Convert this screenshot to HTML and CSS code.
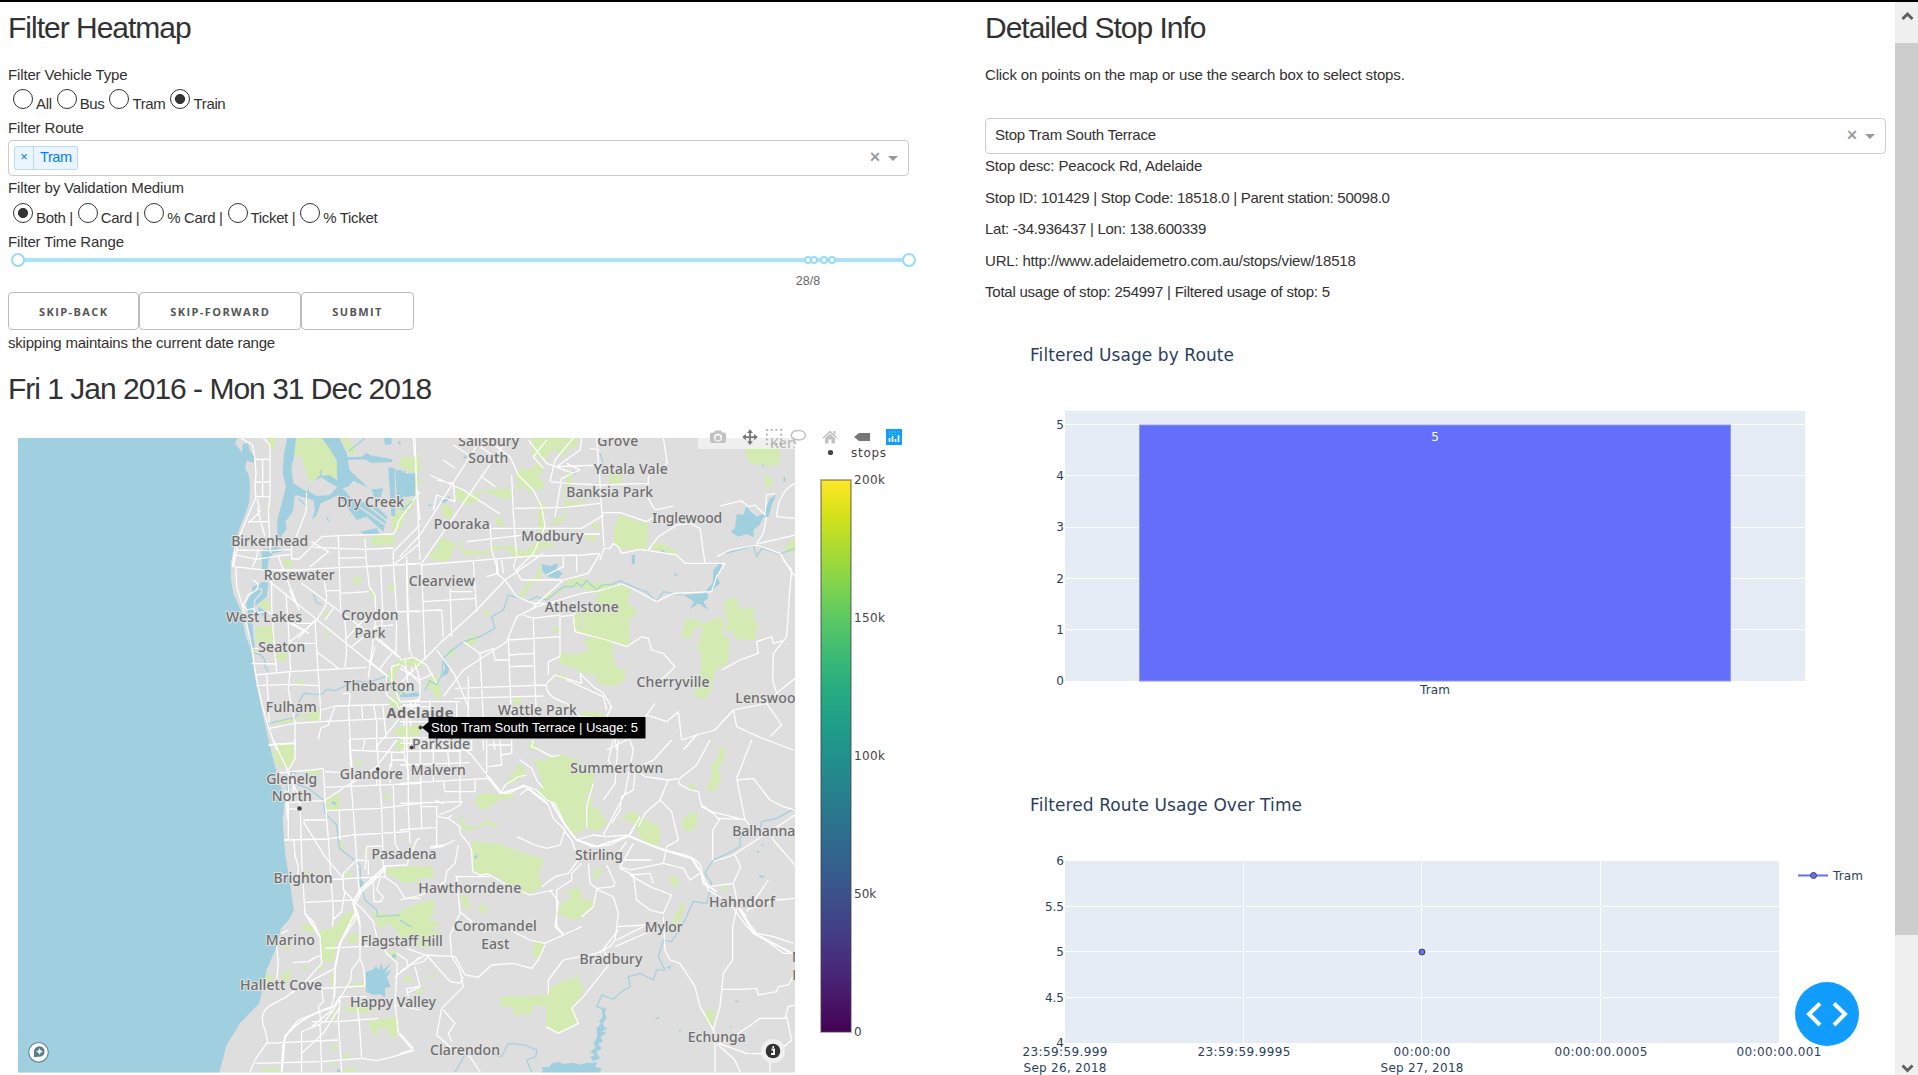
FILE: index.html
```html
<!DOCTYPE html>
<html lang="en">
<head>
<meta charset="utf-8">
<title>Adelaide Metro Heatmap</title>
<link rel="stylesheet" href="styles.css">
</head>
<body>
<div class="page">
<main class="columns">
<section class="column">
  <h3>Filter Heatmap</h3>
  <div class="line">Filter Vehicle Type</div>
  <div class="radios vehicle">
    <label><i class="radio"></i><span>All</span></label>
    <label><i class="radio"></i><span>Bus</span></label>
    <label><i class="radio"></i><span>Tram</span></label>
    <label><i class="radio checked"></i><span>Train</span></label>
  </div>
  <div class="line">Filter Route</div>
  <div class="select">
    <div class="tag"><span class="tag-x">×</span><span class="tag-name">Tram</span></div>
    <span class="clear">×</span><span class="arrow"></span>
  </div>
  <div class="line">Filter by Validation Medium</div>
  <div class="radios medium">
    <label><i class="radio checked"></i><span>Both |</span></label>
    <label><i class="radio"></i><span>Card |</span></label>
    <label><i class="radio"></i><span>% Card |</span></label>
    <label><i class="radio"></i><span>Ticket |</span></label>
    <label><i class="radio"></i><span>% Ticket</span></label>
  </div>
  <div class="line">Filter Time Range</div>
  <svg class="slider" viewBox="8 254 910 38" width="910" height="38">
    <rect x="18" y="258" width="891" height="4" fill="#abe2fb"/>
    <g fill="#fff" stroke="#96dbfa" stroke-width="2">
      <circle cx="808" cy="260" r="3"/><circle cx="814" cy="260" r="3"/><circle cx="824" cy="260" r="3"/><circle cx="832" cy="260" r="3"/>
      <circle cx="18" cy="260" r="6"/><circle cx="909" cy="260" r="6"/>
    </g>
    <text x="808" y="285" text-anchor="middle" class="mark">28/8</text>
  </svg>
  <div class="buttons"><button>Skip-back</button><button>Skip-forward</button><button>Submit</button></div>
  <div class="line hint">skipping maintains the current date range</div>
  <h3 class="date">Fri 1 Jan 2016 - Mon 31 Dec 2018</h3>

  <svg class="map" viewBox="8 408 910 667" width="910" height="667">
    <defs>
      <clipPath id="frame"><rect x="18" y="438" width="777" height="634.5"/></clipPath>
      <linearGradient id="viridis" x1="0" y1="1" x2="0" y2="0">
        <stop offset="0" stop-color="#440154"/><stop offset=".0627" stop-color="#48186a"/><stop offset=".1255" stop-color="#472d7b"/>
        <stop offset=".1882" stop-color="#424086"/><stop offset=".251" stop-color="#3b528b"/><stop offset=".3137" stop-color="#33638d"/>
        <stop offset=".3765" stop-color="#2c728e"/><stop offset=".4392" stop-color="#26828e"/><stop offset=".502" stop-color="#21918c"/>
        <stop offset=".5647" stop-color="#1fa088"/><stop offset=".6275" stop-color="#28ae80"/><stop offset=".6902" stop-color="#3fbc73"/>
        <stop offset=".7529" stop-color="#5ec962"/><stop offset=".8157" stop-color="#84d44b"/><stop offset=".8784" stop-color="#addc30"/>
        <stop offset=".9412" stop-color="#d8e219"/><stop offset="1" stop-color="#fde725"/>
      </linearGradient>
    </defs>
    <g clip-path="url(#frame)">
      <rect x="18" y="438" width="777" height="635" fill="#dedede"/>

      <!-- north west -->
      <g transform="translate(0 420) scale(.33333)">
        <g class="park">
          <path d="M885 54H970L1000 90 1014 140 1010 178 985 165 960 168 930 190 912 140 905 110 883 108ZM1020 54H1045L1072 100 1050 104ZM800 54H825V88H812ZM1225 112L1260 110V160L1245 155 1208 138ZM1175 290L1222 240 1260 230 1215 290 1205 325 1180 342ZM1115 347H1182V376H1115ZM845 422L878 418 875 440 862 445ZM1062 470H1083V493H1062ZM1165 497H1181V513H1165ZM780 543H817V569L780 566ZM768 620L820 618 822 672 770 666ZM830 700L866 692 862 712 848 726 832 720ZM972 580L986 570V584L972 588ZM975 630L984 635V658L978 655ZM1105 495L1125 520V545L1112 525ZM890 780L910 778V793L895 794ZM922 875L960 868V900L922 905ZM800 915L885 895 920 880 918 890 880 905 805 916ZM1160 765L1185 728 1215 715 1260 716V732L1215 730 1192 748 1182 770 1195 810 1225 822 1230 832 1195 828 1170 810ZM1168 825L1195 840 1205 850 1188 870 1168 850ZM1182 928L1260 912V950L1210 950 1182 946ZM1188 964H1210V988H1188ZM820 976L870 972V990H826ZM797 262L808 250V275ZM720 560L730 600 735 635 722 600ZM755 690H772V703H758Z"/>
        </g>
        <g class="water">
          <path d="M54 54H712L705 70 722 92 740 115 735 145 746 165 750 190 748 245 735 285 720 320 705 370 692 430 693 480 700 520 722 570 735 640 755 700 765 770 790 890 812 990H54Z"/>
          <path d="M862 54H888L882 110 874 145 880 190 920 215 935 190 958 168 990 165 1012 182 1010 120 985 80 965 54H1018L1040 100 1048 150 1105 203 1060 182 1045 200 1028 205 1058 240 1125 255 1162 290 1150 335 1100 290 1070 300 1015 225 985 240 962 250 950 285 935 300 945 270 940 240 885 225 878 275 856 305 860 328 842 350 845 370 832 360V300L845 250 858 200 848 160 852 100Z"/>
          <path d="M728 72L745 70 748 90 762 108V128L740 122 725 105ZM785 390L830 380 855 392 820 400 805 420 802 455 786 450ZM790 485L805 490 800 530 776 550 762 560 768 575 745 582 738 550 755 520 758 500ZM740 588L758 615 760 650 766 690 750 685ZM1040 112L1085 110 1100 98 1110 106 1178 118 1175 127 1112 128 1095 118 1040 120ZM1152 54H1175V72L1155 75ZM1165 142L1184 145 1186 288 1174 288ZM1186 150H1205L1212 225 1192 270ZM1210 155L1225 165 1230 230 1212 230ZM1227 162L1245 168V228H1232ZM1115 208L1150 205 1142 232H1122ZM1080 335L1130 325 1140 342 1090 342ZM1197 62L1203 66 1200 76 1195 70ZM1200 812L1225 825 1260 818V828L1218 832ZM775 560L805 580 795 595 775 575Z"/>
        </g>
        <path d="M935 185L965 172 990 190 1012 200 990 225 950 228 925 214Z" fill="#dedede"/>
        <path d="M1080 262L1160 318M1095 250L1165 306M764 510Q790 498 785 518L765 540Q760 560 766 572" class="gap"/>
        <path class="creek" d="M940 522L950 548 965 555M962 150V168M1045 95L1095 54M895 235L920 258M980 292L987 304M765 700Q800 705 795 740L805 755M800 912L885 892 905 870 897 845 912 820 965 825 980 808 1005 812 1030 800 1060 782 1105 788 1160 768 1170 800 1200 820M1230 250L1250 235"/>
        <g class="roads">
          <path d="M722 54L758 75 765 118 768 160 765 200 768 232 745 285 718 350 700 440M790 54L810 75V118 230L805 270 812 400M765 118H810M788 118V230M765 186H808M765 230H808M772 235L780 275 745 310M745 305H805M772 265L795 350M700 440L790 450 900 450 1015 443 1138 438 1260 430M708 405L770 418 820 410 875 403M705 375L698 440M775 388L768 418 756 442M710 390L812 392 875 388M920 218L918 275 875 385V417H898L935 380 965 350 1015 347 1180 342Q1195 320 1195 305L1260 215M935 365L985 395 930 440M940 382L1095 388 1180 384M1015 347L1018 445 1022 570M1015 415L1097 412M1260 315L1180 395V435L1190 575 1188 700M1180 435L1260 370M1095 355L1098 410 1108 500 1125 525 1128 590 1118 670 1105 775M1020 520L1105 515M978 512H1018M1142 440L1148 570 1145 620M1142 575H1260M708 445L710 500 728 560 742 620 755 680 768 770 785 850 805 920 830 990M760 480L775 492 770 510 745 525 730 555 740 570 760 565 768 578 800 575M810 485L1160 768M815 460V560L822 665 830 755M868 510L898 570M860 450V480M835 410L870 500 890 550M858 520L865 620 872 755M968 455L980 530 978 555 950 600 870 665M905 490L1095 630 1195 710M945 600L950 690 962 870 960 902M890 610H940M800 575L905 628M1000 565L975 600M1035 660L1100 590M760 685H775M755 730L828 732M765 765L870 755 1100 742M768 797L868 793 960 797M800 760L805 850 808 910M870 755L865 810 885 905V990M950 695L1015 745M1035 600L1040 690 1035 742M870 670H945M1130 650L1225 735M1175 700L1140 745M1105 720L1165 770M1125 680L1108 745M1055 680L1128 620 1180 615M810 925L880 910 965 905 1165 895M1005 858L985 915 962 925 955 958M965 870L1005 858 1168 853M1045 855L1052 990M1085 855L1088 900M1030 820H1050L1048 855M1120 850L1130 905V990M1148 855L1158 950M1205 730L1175 740V780L1200 845 1260 840M1160 765V825L1190 850 1212 900V990M1205 735L1260 790M1235 700V765M1208 855H1260M1208 870H1260M1208 888H1260M1210 905H1260M1232 845V990M1130 980L1210 880M1048 958L1260 950M805 975L885 970M1240 54L1250 200 1260 300M1220 410L1222 575 1230 700M860 600L928 640M895 655L945 600"/>
        </g>
      </g>

      <!-- north east -->
      <g transform="translate(400 420) scale(.33333)">
        <g class="park">
          <path d="M395 54H535L530 82 505 88 490 110 465 95 470 78 430 120 395 105ZM1035 84H1142L1138 132 1118 138 1052 132 1038 110ZM1095 165L1125 182 1105 205 1095 200ZM355 150L400 145 410 120 432 150 412 170 435 190 425 215 400 200 390 225 375 200 340 212 358 185 345 175ZM170 200L215 225 240 215 240 240 200 255 165 235ZM128 245L160 270 155 298 128 290ZM120 352L168 372 145 425 100 420 85 400 110 390ZM628 165H664V192H628ZM500 155L520 160 500 250 495 300 460 315 462 295 490 290ZM495 250L575 232 540 250 495 262ZM575 310L600 312 592 335 578 325ZM550 340L590 350 588 362 555 355ZM660 283L715 305 745 308 740 380 725 392 660 385 638 365 645 315ZM762 368L800 375 830 398 832 415 795 392 750 388ZM1150 395L1165 362 1185 355V398ZM180 352L195 390 260 395 280 375 340 380 375 395 410 365 465 370 458 382 420 385 410 405 340 410 320 385 285 388 275 400 200 408 180 390ZM420 432L425 470 385 505 370 535 355 532 380 490 405 475ZM510 475L555 475 580 488 610 485 645 492 690 500V530L680 548 715 575 688 600V640L690 672 665 675 635 660 600 665 575 648 545 640 550 605 540 585 575 560 600 525 540 500 500 505 440 538 425 535 490 500ZM522 580H540L545 640 525 635ZM458 575L475 568V585ZM460 622H478V635H462ZM255 572L270 575V585H252ZM975 540L1010 532 1018 570 1065 560 1058 592 1080 625 1068 630V662L1035 660 1005 655 1002 640 975 630 985 600 975 585ZM855 595L905 602 910 615 955 590 970 600 968 645 988 655 982 735 958 740 945 755 935 800 922 835 882 832 890 790 902 770 905 700 890 690 910 620 880 625 875 655 845 655ZM640 655L638 700 650 745 678 750 672 785 640 798 605 795 580 762 545 760 520 740 480 735V695L520 705 570 690 548 660 570 650 600 660ZM470 762L500 765 500 782 480 775ZM340 832H362V855H340ZM545 875L600 880 625 895H545ZM0 715L35 715 72 725 60 745 0 732ZM70 795L100 765 115 770 125 830 110 838 100 815ZM0 920L60 915V950H0ZM385 965L410 975 408 990H390ZM960 980L975 985V990H958ZM0 110L45 112V160L0 140ZM45 160L65 182 45 225ZM235 210L330 205 335 235 310 238 270 220ZM285 290L310 300V318L290 312ZM415 240L435 250 430 345 415 340ZM190 665L225 640 235 660 205 685ZM145 690L160 685 165 702 145 715Z"/>
        </g>
        <g class="water">
          <path d="M1128 225L1115 255 1105 292 1090 290 1078 315 1060 330 1062 352 1040 342 1015 350 992 335 1005 325 1010 282 1030 285 1040 258 1052 275 1070 290 1092 280 1110 235ZM425 432L450 438 475 430 470 448 488 460 475 475 445 470 428 455ZM695 405H705V432H695ZM820 458L835 465 825 468ZM965 440L952 470 960 490 940 508 920 515 925 535 910 545 925 570 895 550 870 568 882 545 852 525 910 520 938 490 940 450 962 425ZM0 165L15 150 20 225 0 230ZM22 160H45V228H24ZM122 242L150 228 148 240 128 250ZM85 250L98 258 88 260ZM0 268L45 240 12 270ZM518 152L528 158 522 168ZM1085 130L1092 140 1088 142ZM1150 172H1156V185H1150ZM192 104L202 112 190 118ZM780 385L800 398 790 400ZM0 825L55 815 35 830 0 832ZM130 715L148 740 145 760 125 770 135 745Z"/>
        </g>
        <path class="creek" d="M75 812L88 782 110 795 125 765 130 715 150 695 190 665 240 650 285 625 275 590 310 570 325 525 360 535 385 542 410 530 440 540 490 500 520 500 530 488 545 500 560 482 590 510 605 495 640 492 660 482 710 505 740 515 768 545 790 515 850 525M975 400L1060 378 1070 410 1085 385 1140 402 1185 385M600 100L610 130"/>
        <g class="roads">
          <path d="M45 54L50 200 60 420M245 54L60 345 0 410M325 54L65 430M200 54L300 120M255 54L330 110M90 165L190 210 300 282M130 120L165 145M160 75L215 110M240 165L285 200M335 165L340 280 350 410M330 110L355 165 400 210 425 260 435 320 400 400 350 450M385 60L440 130 520 160M520 54L465 120 450 185 500 190 605 195M545 54L540 90 470 140 600 135M440 60L400 110 430 145M570 85L600 90M590 54L600 190 612 380M500 130L540 150 485 175 465 290M345 265L495 262 600 250M605 195L745 190 745 170 802 130 795 85 790 54M745 190L742 230 765 270 820 258M605 278L660 278 740 305 765 290M960 258L1025 242 1045 260 1065 255 1095 285 1100 225 1125 220M1185 190Q1135 215 1130 290L1185 295M1100 290L1090 340 1070 370M1185 345L1070 372M745 390L775 350 830 315 870 310M870 310L900 325 915 430M60 435L400 408 550 405 600 400M270 312L275 390 290 440 290 460 315 480 350 530 400 550 490 550M270 325L545 325 612 285M200 365L370 345 600 342M612 385L630 385 640 370 655 380 665 400 720 388 830 405 855 430 915 430 975 430 950 470 935 515 820 520 770 545 705 510 665 492 600 512 545 520 410 560 350 590 320 665 190 750M600 400L565 460 490 480 400 560M612 385L600 420M290 420L295 460 260 470M315 480L230 570 120 670 70 720 0 790M220 425L230 575M0 435L60 430M20 420L28 690M65 435L75 720M0 575L125 570M70 545L230 535M150 505L155 650M150 515H215M125 570L130 650M305 420L310 460M350 410L340 440 365 480 485 480M315 480L430 400M440 465L490 440 490 405M530 405V455M325 660L330 790 335 900M325 660L480 650V710L445 725V765M400 590L405 800 410 890M370 585L400 595 480 585V650M480 590L520 585 525 635 620 660 680 680 725 650 745 655 755 690 790 700 825 740 800 765 765 790M520 545L525 585M190 665L240 700 250 900M240 700L280 685 285 720H325M325 705L400 700M325 740L400 738M110 690L165 765 205 860M190 750L130 830M165 805L440 795M165 835L430 828M205 770V900M440 795Q435 830 500 850L540 890 625 895M440 790L465 765 545 790 540 760 580 800 610 820 635 860 620 890 640 930M500 780L610 830 620 870M740 885L765 850M740 885L720 910 730 960M740 885L800 905 835 875 845 960M845 960L890 945 945 930 1000 870M965 750L1020 720 1075 700 1070 665 1115 650 1120 670 1155 660M1185 470L1150 420 1175 450 1168 530 1160 650 1120 700 1118 780 1130 820M1130 820L1185 775M1130 820L1100 850 1000 870 1010 920 1075 950 1180 990M1100 850L1145 915 1110 950M950 410L990 390 1070 375 1140 400 1165 440M850 990L890 945M700 950L620 990M640 930L650 990M110 180L160 190 165 245 110 225 100 270M0 720L40 712 80 735 110 790M0 745L60 780 100 760M15 720L25 800M45 730L60 780M0 845H180M0 860H90M0 885H90M0 905H90M60 780V830L20 890V990M90 840L85 960 95 990M0 955L250 950M130 870V990M250 960V990M280 960L285 990M170 850V900"/>
        </g>
      </g>

      <!-- south west -->
      <g transform="translate(0 740) scale(.33333)">
        <g class="park">
          <path d="M835 15H885V60L865 90 845 75 830 40ZM815 30L830 40 845 85 830 75ZM1068 65L1083 62V75L1065 78ZM1152 162H1168V178H1152ZM980 175L1018 160V210H980ZM925 90L965 85 955 105 925 110ZM1188 5H1210V30H1188ZM1018 295L1040 345 1018 325ZM1095 318H1105V338H1095ZM1038 395H1055V410H1038ZM1160 385L1260 378V425L1215 430 1158 400ZM912 395H935V402H912ZM905 552L940 555 945 580 925 575 905 568ZM1060 510L1068 525 1035 580 1010 610 1000 665H968L965 625 960 580 950 572 1000 565 1030 525ZM1045 585L1078 580 1070 610H1045ZM1115 515L1180 525 1260 490V590L1200 585 1165 545 1140 570ZM835 615L880 618 860 628ZM905 695L925 665 918 690ZM860 695L875 690 865 725 845 735 840 710ZM795 700L820 710 790 755 785 740ZM950 690L968 665V690ZM1000 685L990 720 1000 740 1008 700ZM1040 735L1092 725V745ZM1165 635L1190 630 1190 665 1165 650ZM1215 710H1232V726H1215ZM1103 845L1192 828V892L1170 888 1160 862 1130 868 1140 890 1118 880ZM1030 800L1100 800 1130 815 1085 820 1040 812ZM1010 805V835L992 840ZM990 920L1012 912V925L998 928ZM1030 940L1052 945V955H1030ZM985 965L1010 968 1000 978ZM785 988L830 982 850 996H785ZM1030 985H1075L1060 996H1030ZM1240 310H1248V325H1240ZM1155 330H1170V350Z"/>
        </g>
        <g class="water">
          <path d="M54 0H805L828 90 830 110 855 170 848 240 855 340 872 440 881 510 870 535 843 565 830 620 800 690 785 760 778 790 720 850 680 915 668 960 657 1000H54ZM865 90L875 100 868 150 858 155ZM992 190L1002 182 1012 196ZM1078 415L1090 425V445L1080 440ZM1098 695L1118 690 1128 678 1138 690 1142 668 1150 690 1172 668 1155 700 1175 688 1160 712 1172 740 1155 745V772L1140 762 1120 765 1098 755Z"/><circle cx="1182" cy="648" r="6"/><circle cx="1016" cy="992" r="5"/>
        </g>
        <path class="creek" d="M865 95L890 100M885 130L925 145 970 180 975 220 1010 255 1018 325 1060 358 1080 375 1082 430 1095 480 1130 510 1132 530 1200 525 1235 562"/>
        <g class="roads">
          <path d="M805 15L885 8M820 0L865 95 900 180 905 360 915 520 940 545 960 590 965 670 920 720 860 770 805 800Q775 825 795 870L803 905 765 960 750 996M885 0V55L865 90M830 100L870 95 935 90 970 85 975 180 985 295 990 375 1000 510 998 560M865 95V160L865 300M880 100V180M858 150L862 240M860 188L975 182M860 206L900 208M852 300L985 297 1060 285 1225 275M975 95L1020 98M975 142L1260 130M975 180L1130 80 1190 0M978 212L1140 205 1260 190M1048 0L1055 150 1065 280 1070 360 1078 460M1048 30L1210 38M1095 0L1088 30M1130 0L1145 200 1150 380M1130 80V135M1170 70V130M1175 35V80M1212 0V38L1225 100V210L1230 310M1180 135L1185 310 1200 340 1220 350M1052 35L1060 130M1175 60H1215M910 240L980 240M910 245L975 350 1030 415M882 300L885 345 895 380 893 440M1018 210L1020 300M1100 320L1145 318M1100 320L1095 390M1065 360L1105 362 1105 405M1070 360L1030 400V450L1060 480M960 420L1155 410 1155 375M1155 412L1190 435 1215 475H1260M1155 378L1220 375 1250 300 1260 295M1150 350L1130 330M1155 390L1110 430Q1065 470 1058 490Q1078 530 1055 555L1020 610 1005 680 1003 770 990 815M1158 384L1115 430Q1082 450 1068 490L1090 510 1120 545 1130 590 1160 640 1192 670 1185 790M1060 490Q1080 520 1080 560V655L1055 690 1052 720 1000 810 970 850M915 487L1060 480M1035 450L1025 515 998 540M1120 430L1122 485H1142L1150 470 1130 450 1140 415M975 625L1165 615M845 580L865 570M830 620L835 670 830 720M878 668L925 665 950 650 965 648M1005 685L900 740 875 760M1080 655L1090 680 1095 735M960 745L1095 738M965 745L970 785 955 800 965 850 905 875V996M1190 640L1220 660 1225 680 1185 710M1225 680L1260 650M1225 770L1220 745 1260 740M1020 780L1015 840 1025 996M1020 800L970 880 905 940M1100 770H1020L1000 800 895 840Q850 890 848 920L845 996M990 815L935 860M1010 845L1135 835M935 845H1010M1070 780L1078 850 1085 955M800 910L1015 900M765 970L960 965 1085 955 1130 962 1180 950 1240 932 1195 880 1185 790M960 850L965 996M1185 795L1260 810"/>
          <path class="thick" d="M1155 380L1085 445Q1055 480 1065 510L1080 555M1065 520L1020 610 1005 685 1003 770M1000 800Q900 830 855 890L845 996M915 520L960 590"/>
        </g>
      </g>

      <!-- south east -->
      <g transform="translate(400 740) scale(.33333)">
        <g class="park">
          <path d="M395 0H405L410 22 398 30ZM400 55L435 65 440 50 490 42 530 60 585 95 580 130 582 150 555 165 560 260 530 285 512 280 495 245 465 190 430 180 415 150 428 130ZM560 165L580 175 575 200 600 210 605 230 625 245 595 275 562 265ZM230 170L255 158 290 162 340 160 345 170 290 185 250 210 225 195ZM172 222L185 230 200 262 240 255 262 238 295 258 292 265 260 252 210 272 190 270ZM365 75L380 100 370 110 345 125 310 140 325 115 345 100 328 98 352 92 345 82ZM215 302L300 312 360 335 435 358 415 400 425 440 395 460 370 460 320 430 285 405 240 402 215 395ZM665 235L695 210 720 230 760 250 780 262V310L755 320 725 300 700 248ZM845 240L875 215 895 225 890 255 865 278 848 265ZM960 22L978 25 970 60 955 90 965 115 942 155 918 150 938 100 930 80 950 60ZM860 140L880 128 885 150 865 150ZM580 395L610 378 600 405 580 425ZM500 455L530 442 548 458 540 475 580 482 578 505 550 520 545 538 515 540 472 520 480 495 512 475ZM805 415L830 408 838 430 820 443ZM845 490L855 495 840 545 815 550 825 525ZM962 435L990 442 970 455ZM0 385L95 378 102 415 40 412 0 425ZM0 515L50 492 105 480 100 520 85 540 122 550 95 570 125 580 100 620 70 625 0 590ZM180 465L205 470 210 508 190 505ZM235 498L250 492 262 508 255 525 238 515ZM400 620L412 598 432 610 425 640 412 655 395 645ZM450 740L480 730 490 720 525 715 530 695 542 735 555 742 540 775 518 800 535 840 530 855 475 880 438 858V800L398 795 395 825H345L335 798 302 802V770L440 765ZM70 708L108 705 108 712 75 712ZM15 710H35V725H15ZM45 745L75 755 55 765ZM918 810L945 812 938 862 912 840ZM0 5H12V25H0ZM485 115L505 120V138L485 135Z"/>
        </g>
        <g class="water">
          <path d="M222 350L232 343V353L224 356ZM1080 315L1090 312 1092 317ZM1068 333H1078V337H1070ZM1075 405L1095 408 1085 415ZM1005 780L1015 783 1008 788ZM762 840L778 828 775 836ZM835 868L845 873 838 876ZM988 858L998 861 992 864ZM605 800L612 808 620 800 614 820 620 835 608 848 612 860 622 865 606 875 620 878 602 890 608 905 594 912 606 925 588 935 600 955 575 965 592 968 585 980 605 985 600 998H422L430 992 424 982 450 980 455 970 475 965 490 972 520 968 540 974 560 968 582 970 572 950 585 945 570 935 586 925 582 908 592 890 590 865 604 850 596 845 608 830Z"/><path d="M800 682L815 675 808 688Z"/>
        </g>
        <path class="creek" d="M605 805L590 800 605 765 640 778 665 755 690 740 685 710 720 700 760 720 770 690 795 690 775 650 790 600 815 605 850 550 880 485 920 490 935 430 915 400 940 360 985 340 1020 320 1020 290 1080 270 1085 245 1130 235 1185 205M0 540L35 562M165 996L195 945 250 935 305 950 325 910 375 915 410 930 408 950 380 960 395 996"/>
        <g class="roads">
          <path d="M0 10H200M0 35L215 30M0 75L210 68M0 130L265 115 300 160 330 160 370 135 410 150 440 180 465 190 495 255 530 300M185 20L215 45 265 110M20 0L25 130M60 0L65 270M100 0V130M140 0L150 110M180 30V185M215 0V30M260 0V110M265 15H335M300 0L305 75 265 80M335 0V40L300 45M130 125L135 155H225V118M0 190L185 185 180 195 155 210 115 225M60 200H110V230L145 235M0 270L60 265 110 262M105 180L130 192M90 325L125 320 165 300M155 225L145 235 180 260 180 280 205 310 215 330 218 395 240 405 265 402 320 435 390 465 460 450M110 235V315M90 320L135 315M0 480L65 465 135 425 140 395 165 370 175 315M165 410H270M170 410L180 520 150 585 155 650 180 690 190 740 125 805 110 885 150 920 210 950 240 996M180 515L250 575 330 570 390 600 435 610 490 585 545 560M400 0L395 20 415 28 455 50 480 45M360 60L395 85 410 120 430 145M305 155L315 135 355 110 380 105M360 165L385 145 420 170 445 195 460 235 495 270 480 315 440 325 405 315 350 290M530 300L575 320 630 315 685 288 760 320 870 350Q910 370 905 400L925 440 1000 430M495 275L515 300 535 360 505 400 465 410 425 440M530 300L580 285 620 290 690 285 720 230M560 260V200L580 130M640 0L625 60 640 90M655 0L645 130 610 180M690 0L700 30 675 160 610 285M705 100L700 150 665 170 660 210 635 250M815 0L760 60 705 85 735 110 805 120 840 115 890 75 930 0M805 120L780 180 735 220 715 260M780 180L815 215 835 300 800 320 790 370M840 115L835 130 870 150 895 155 905 200 940 220 958 240 938 270V360M905 195L935 215 1035 240 1010 115 1055 0M1010 120L1060 115 1110 180 1150 200 1185 210M955 235L1035 238 1060 270M1185 375L1120 300 1110 280M1185 225L1000 345 940 365M1005 345L1022 380 1000 430 1015 500 1040 530M1040 515L1105 420M1040 510L1130 480 1185 475M900 400L870 420 850 385 790 370 690 390 660 380 700 310M565 370L570 430 595 450 640 470 655 520 645 600 630 620 590 640 490 660 445 720V765M545 370L515 400V420L470 450 470 560 490 580M590 450L580 500 545 530M620 375L645 430 640 440 590 445M450 450L475 485 465 560 490 585M660 385L700 405 710 480 750 510 790 520 815 465 750 440 690 405 750 400 760 430M650 560L740 555M650 600L730 560M645 620L760 570 790 560M790 530L795 630 810 660 840 670 885 740 900 800 940 870 948 910M905 400L925 450 990 490 1040 560 1110 610 1150 640 1185 640M1015 505L1070 580 1120 590 1180 610M1010 505L998 560V660L970 700 965 750M965 748H1025L1070 745 1075 765 1130 755 1135 740 1165 735 1185 700M965 750L960 800 940 870M945 910V996M950 915L985 900 1060 850 1080 835 1155 835 1165 800 1185 795M955 910L1040 940 1110 942M955 915L1005 960 1020 996M1110 955V996M1160 830L1175 900 1140 930M435 615L415 660 395 685 340 670 275 675 235 712 195 705 165 650 75 645 20 680M190 710L180 730 150 725 80 645M20 625L75 645M45 680L60 740 20 760M630 670L550 770 515 805 535 850 475 880 438 860M0 880L40 925M0 940L35 930M130 810L165 850 145 880 155 905M635 670L610 630M685 290L720 230M600 640L655 570M680 305L640 360 755 360M0 695L30 675 70 665 90 645"/>
          <path class="thick" d="M265 110L305 160 375 138 440 190M455 190L495 255 530 300 590 320 685 288 790 330 875 355 905 400 910 430 950 455M1015 500L1060 580 1120 610 1185 645"/>
        </g>
      </g>

      <g class="places">
        <text x="488.7" y="446" textLength="61">Salisbury</text><text x="488.3" y="463" textLength="40">South</text>
        <text x="370.7" y="507" textLength="67">Dry Creek</text><text x="269.7" y="546" textLength="77">Birkenhead</text>
        <text x="299.3" y="580" textLength="71">Rosewater</text><text x="264" y="622" textLength="76">West Lakes</text>
        <text x="370" y="620" textLength="57">Croydon</text><text x="370" y="638" textLength="31">Park</text>
        <text x="281.7" y="652" textLength="47">Seaton</text><text x="379" y="691" textLength="71">Thebarton</text>
        <text x="291.3" y="712" textLength="51">Fulham</text><text x="420" y="718" textLength="67" class="city">Adelaide</text>
        <text x="617.7" y="446" textLength="41">Grove</text><text x="630.7" y="474" textLength="74">Yatala Vale</text>
        <text x="609.7" y="497" textLength="87">Banksia Park</text><text x="461.7" y="529" textLength="56">Pooraka</text>
        <text x="552.3" y="541" textLength="62">Modbury</text><text x="687.3" y="523" textLength="70">Inglewood</text>
        <text x="441.7" y="586" textLength="66">Clearview</text><text x="581.7" y="612" textLength="74">Athelstone</text>
        <text x="673" y="687" textLength="73">Cherryville</text><text x="769.8" y="703" textLength="69">Lenswood</text>
        <text x="537.3" y="715" textLength="79">Wattle Park</text><text x="441" y="749" textLength="58">Parkside</text>
        <text x="438.3" y="775" textLength="55">Malvern</text><text x="291.7" y="784" textLength="51">Glenelg</text>
        <text x="291.7" y="801" textLength="40">North</text><text x="371.3" y="779" textLength="63">Glandore</text>
        <text x="616.7" y="773" textLength="93">Summertown</text><text x="404" y="859" textLength="65">Pasadena</text>
        <text x="303" y="883" textLength="59">Brighton</text><text x="599" y="860" textLength="48">Stirling</text>
        <text x="763.7" y="836" textLength="63">Balhanna</text><text x="469.7" y="893" textLength="103">Hawthorndene</text>
        <text x="742" y="907" textLength="66">Hahndorf</text><text x="495.3" y="931" textLength="83">Coromandel</text>
        <text x="495.3" y="949" textLength="28">East</text><text x="663.7" y="932" textLength="38">Mylor</text>
        <text x="290.3" y="945" textLength="49">Marino</text><text x="401.7" y="946" textLength="82">Flagstaff Hill</text>
        <text x="611" y="964" textLength="63">Bradbury</text><text x="281" y="990" textLength="82">Hallett Cove</text>
        <text x="393" y="1007" textLength="86">Happy Valley</text><text x="465" y="1055" textLength="70">Clarendon</text>
        <text x="716.7" y="1042" textLength="58">Echunga</text><text x="797.5" y="962">N</text><text x="797.5" y="980">H</text>
        <text x="770" y="448" class="cut">Kers</text>
      </g>
      <g fill="#444"><circle cx="420.5" cy="727.5" r="2"/><circle cx="411.5" cy="747.5" r="2"/><circle cx="299.5" cy="808.5" r="2.3"/><circle cx="377.7" cy="769" r="1.7"/></g>
      <g>
        <circle cx="38.5" cy="1052.3" r="9.8" fill="#fff" stroke="#5f8796" stroke-width="1.2"/>
        <path d="M34 1057V1051.500A5.300 5.300 0 1 1 39 1056.800Z" fill="#567d8c"/><path d="M39.500 1048.500L40.500 1050.600 42.500 1051.500 40.500 1052.400 39.500 1054.500 38.500 1052.400 36.500 1051.500 38.500 1050.600Z" fill="#fff" stroke="#fff" stroke-width=".4"/>
        <circle cx="773" cy="1051" r="12" fill="#f0f0f0"/><circle cx="773" cy="1051" r="7.300" fill="#333"/>
        <path d="M771.500 1049.500H774V1054H775M771 1054H775M772.500 1047H774" stroke="#fff" stroke-width="1.800" fill="none"/>
      </g>
    </g>

    <!-- chart toolbar -->
    <rect x="698" y="427" width="206" height="22" fill="#fff" opacity=".5"/>
    <g fill="#c2c2c2">
      <path fill-rule="evenodd" d="M712 432.500H714L715 430.500H721L722 432.500H724Q726 432.500 726 434.500V441Q726 443 724 443H712Q710 443 710 441V434.500Q710 432.500 712 432.500ZM718 433.800A4 4 0 1 0 718 441.800A4 4 0 1 0 718 433.800ZM718 435.300A2.500 2.500 0 1 1 718 440.300A2.500 2.500 0 1 1 718 435.300Z"/>
      <path d="M830 430.500L837.500 437.500 836.500 438.500 830 432.700 823.500 438.500 822.500 437.500ZM830 433.800L835 438.300V443.500H831.500V439.500H828.500V443.500H825V438.300ZM833.500 431H835.500V435L833.500 433.200Z"/>
    </g>
    <path d="M766.900 429V445M781.100 429V445M766 429.900H782M766 444.100H782" stroke="#aaa" stroke-width="1.800" stroke-dasharray="1.800 2.950" fill="none"/>
    <path d="M796 440C788 437 791 430.500 799 430.500C807 430.500 808 440 799 440C797 440 794 438 793.500 440C793 442 796 441 795.500 444" stroke="#c2c2c2" stroke-width="1.500" fill="none"/>
    <g fill="#777"><path d="M750 429.300L753 433H750.900V436.200H754.100V434L757.800 437.100 754.100 440.200V438H750.900V441.200H753L750 445 747 441.200H749.100V438H745.900V440.200L742.200 437.100 745.900 434V436.200H749.100V433H747Z"/><path d="M854 437L859 433H870V441H859Z"/></g>
    <rect x="886" y="429" width="16" height="16" fill="#119dff"/>
    <path d="M889.500 438V442M892.500 436V442M895.500 439V442M898.500 435V442" stroke="#fff" stroke-width="1.700"/><path d="M889 434.500H890.500M889 432H899M892 434.500H893M895 434.500H896" stroke="#6ce0ff" stroke-width="1.200" stroke-dasharray="1.300 1.600"/>

    <circle cx="830.500" cy="452.500" r="2.600" fill="#444"/>
    <rect x="821" y="480" width="30" height="552" fill="url(#viridis)" stroke="#444" stroke-opacity=".55" stroke-width="1.500"/>
    <g class="ticks dark"><text x="851" y="457" textLength="35">stops</text><text x="854" y="484" textLength="31">200k</text><text x="854" y="622" textLength="31">150k</text><text x="854" y="760" textLength="31">100k</text><text x="854" y="898">50k</text><text x="854" y="1036">0</text></g>
    <path d="M422 727.500L428.500 722V717H645.500V738.500H428.500V733Z" fill="#000"/>
    <text x="431" y="732" class="tip" textLength="207">Stop Tram South Terrace | Usage: 5</text>
  </svg>
</section>

<section class="column">
  <h3>Detailed Stop Info</h3>
  <div class="line intro">Click on points on the map or use the search box to select stops.</div>
  <div class="select"><span class="value">Stop Tram South Terrace</span><span class="clear">×</span><span class="arrow"></span></div>
  <div class="details">
    <p>Stop desc: Peacock Rd, Adelaide</p>
    <p class="numeric">Stop ID: 101429 | Stop Code: 18518.0 | Parent station: 50098.0</p>
    <p class="numeric">Lat: -34.936437 | Lon: 138.600339</p>
    <p class="url">URL: http://www.adelaidemetro.com.au/stops/view/18518</p>
    <p class="totals">Total usage of stop: 254997 | Filtered usage of stop: 5</p>
  </div>
  <svg class="chart" viewBox="985 304 901 450" width="901" height="450">
    <text x="1030" y="361" class="title" textLength="204">Filtered Usage by Route</text>
    <rect x="1065" y="411" width="740" height="270" fill="#e5ecf6"/>
    <path d="M1065 424.500H1805M1065 475.500H1805M1065 527.500H1805M1065 578.500H1805M1065 629.500H1805" class="grid"/>
    <rect x="1139.500" y="425" width="591" height="256" fill="#636efa" stroke="#8f99fb"/>
    <text x="1435" y="441" class="ticks white" text-anchor="middle">5</text>
    <g class="ticks" text-anchor="end"><text x="1064" y="429">5</text><text x="1064" y="480">4</text><text x="1064" y="531">3</text><text x="1064" y="583">2</text><text x="1064" y="634">1</text><text x="1064" y="685">0</text></g>
    <text x="1435" y="694" class="ticks" text-anchor="middle" textLength="30">Tram</text>
  </svg>
  <svg class="chart" viewBox="985 754 901 321" width="901" height="321">
    <text x="1030" y="811" class="title" textLength="272">Filtered Route Usage Over Time</text>
    <rect x="1065" y="861" width="714" height="182" fill="#e5ecf6"/>
    <path d="M1065 906.500H1779M1065 951.500H1779M1065 997.500H1779M1243.500 861V1043M1421.500 861V1043M1600.500 861V1043" class="grid"/>
    <circle cx="1422" cy="952" r="3" fill="#636efa" stroke="#444"/>
    <g class="ticks" text-anchor="end"><text x="1064" y="865">6</text><text x="1064" y="911">5.5</text><text x="1064" y="956">5</text><text x="1064" y="1002">4.5</text><text x="1064" y="1047">4</text></g>
    <g class="ticks" text-anchor="middle"><text x="1065" y="1056" textLength="85">23:59:59.999</text><text x="1065" y="1072" textLength="83">Sep 26, 2018</text><text x="1244" y="1056" textLength="93">23:59:59.9995</text><text x="1422" y="1056" textLength="57">00:00:00</text><text x="1422" y="1072" textLength="83">Sep 27, 2018</text><text x="1601" y="1056" textLength="93">00:00:00.0005</text><text x="1779" y="1056" textLength="85">00:00:00.001</text></g>
    <path d="M1798 875.500H1828" stroke="#636efa" stroke-width="2"/><circle cx="1813.500" cy="875.500" r="3" fill="#636efa" stroke="#444"/>
    <text x="1833" y="880" class="ticks" textLength="30">Tram</text>
  </svg>
</section>
</main>
<aside class="scrollbar">
  <svg viewBox="0 0 23 41" width="23" height="41"><path d="M7.500 17L12.500 12 17.500 17" class="chevron"/></svg>
  <div class="thumb"></div>
  <svg class="down" viewBox="0 0 23 23" width="23" height="23"><path d="M7.500 13.500L12.500 18.500 17.500 13.500" class="chevron"/></svg>
</aside>
</div>
<svg class="debug" viewBox="0 0 64 64" width="64" height="64"><circle cx="32" cy="32" r="32" fill="#119dff"/><path d="M25 21.500L14 32 25 43M39 21.500L50 32 39 43" fill="none" stroke="#fff" stroke-width="4"/></svg>
</body>
</html>
```
FILE: styles.css
```css
* { box-sizing: border-box; }
body {
  margin: 0;
  height: 1075px;
  overflow: hidden;
  background: #fff;
  color: #323232;
  font: 15px/24px "Liberation Sans", Arial, sans-serif;
  letter-spacing: -.15px;
}
svg { letter-spacing: 0; }
.page { display: flex; height: 1075px; border-top: 2px solid #000; overflow: hidden; }
.columns { flex: 1; display: grid; grid-template-columns: 977px 901px; padding: 6px 0 0 8px; }
.column { display: flex; flex-direction: column; min-width: 0; }
.column > * { flex-shrink: 0; }
h3 { margin: 0 0 16px; font-size: 30px; line-height: 39px; letter-spacing: -1px; font-weight: 400; }
.line { height: 24px; }
.radios { display: flex; gap: 5px; padding-left: 5px; letter-spacing: -.35px; }
.vehicle { height: 29px; padding-top: 2px; }
.medium { height: 30px; padding-top: 3px; }
.radios label { display: flex; gap: 3px; }
.radios span { padding-top: 3px; white-space: nowrap; }
.radio { width: 20px; height: 20px; border: 1px solid #333; border-radius: 50%; background: #fff; }
.radio.checked { background: radial-gradient(circle, #333 0 4.700px, #fff 5.300px); }
.select {
  display: flex;
  align-items: center;
  width: 901px;
  height: 36px;
  border: 1px solid #ccc;
  border-radius: 4px;
  padding: 0 10px 0 5px;
}
.tag {
  display: flex;
  height: 24px;
  margin-bottom: 1px;
  border: 1px solid #b8dafd;
  border-radius: 2px;
  background: #ebf5ff;
  color: #007eff;
  line-height: 21px;
}
.tag-x { width: 19px; border-right: 1px solid #b8dafd; text-align: center; font-size: 13px; line-height: 19px; }
.tag-name { padding: 0 5px 0 6px; font-size: 14.500px; letter-spacing: -.4px; }
.value { padding-left: 4px; margin-bottom: 2px; letter-spacing: -.25px; }
.clear { margin-left: auto; margin-bottom: 3px; color: #999; font-size: 18px; line-height: 20px; -webkit-text-stroke: .5px #999; }
.arrow { margin-left: 8px; border: 5px solid transparent; border-top-color: #999; border-bottom: 0; }
.slider { display: block; overflow: visible; }
.mark { font-size: 12.500px; fill: #666; }
.buttons { display: flex; height: 38px; }
button {
  height: 38px;
  padding: 1px 30px 0;
  border: 1px solid #bbb;
  border-radius: 4px;
  background: #fff;
  color: #555;
  font: 700 11px/36px "Open Sans", sans-serif;
  letter-spacing: 1.400px;
  text-transform: uppercase;
  white-space: nowrap;
}
.hint { margin: 1px 0 14px; letter-spacing: -.2px; }
.date { margin: 0; }
.intro { margin-bottom: 31px; }
.details { height: 150px; }
.details p { margin: 0 0 7.500px; }
.details .numeric { letter-spacing: -.27px; }
.details .url { letter-spacing: -.18px; }
.details .totals { letter-spacing: -.23px; }
.chart, .map { display: block; }
.park { fill: #d3eab3; }
.water { fill: #a0cfdf; }
.gap { fill: none; stroke: #dedede; stroke-width: 5; }
.creek { fill: none; stroke: #a0cfdf; stroke-width: 3.500; }
.roads { fill: none; stroke: #fff; stroke-width: 3.800; stroke-linejoin: round; }
.thick { stroke-width: 6; }
.places {
  font: 500 14px "Noto Sans", "Open Sans", sans-serif;
  fill: #6e6e6e;
  text-anchor: middle;
  stroke: #e3e3e3;
  stroke-width: 2px;
  paint-order: stroke;
  stroke-linejoin: round;
}
.city { font-weight: 700; font-size: 14.500px; }
.cut { text-anchor: start; }
.ticks { font: 12px "DejaVu Sans", Verdana, sans-serif; fill: #2a3f5f; }
.dark { fill: #444; }
.white { fill: #fff; }
.title { font: 17px "DejaVu Sans", Verdana, sans-serif; fill: #2a3f5f; }
.tip { font: 13px "Liberation Sans", Arial, sans-serif; fill: #fff; }
.grid { stroke: #fff; fill: none; }
.scrollbar { display: flex; flex-direction: column; width: 23px; background: #f0f0f0; }
.thumb { height: 892px; background: #cdcdcd; }
.down { margin-top: auto; }
.chevron { fill: none; stroke: #606060; stroke-width: 3; }
.debug { position: fixed; left: 1795px; top: 982px; }
```
